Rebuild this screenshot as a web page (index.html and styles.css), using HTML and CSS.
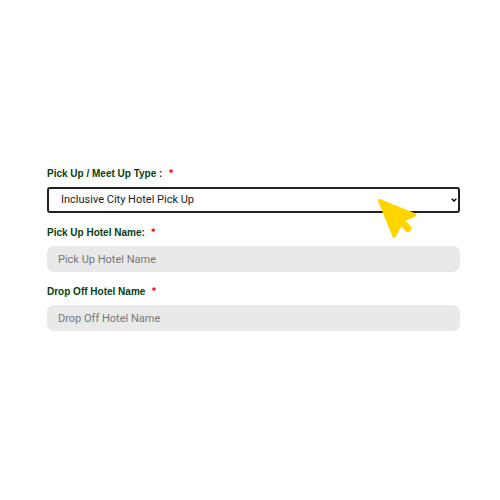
FILE: index.html
```html
<!DOCTYPE html>
<html lang="en">
<head>
<meta charset="utf-8">
<meta name="viewport" content="width=device-width, initial-scale=1">
<title>Pick up details</title>
<link rel="stylesheet" href="styles.css">
</head>
<body>
<form class="form">
  <div class="field">
    <label class="label" for="type">Pick Up / Meet Up Type : <span class="required">*</span></label>
    <div class="select-wrap">
      <select class="control select" id="type">
        <option>Inclusive City Hotel Pick Up</option>
      </select>
      <svg class="chevron" viewBox="0 0 6 4" aria-hidden="true"><path d="M.7.7 3 3 5.3.7"/></svg>
      <svg class="pointer" viewBox="0 0 40 40" aria-hidden="true"><path d="M2.5 2.5 38 17 26 22.5 17 38.5Z"/><path class="tail" d="M22 21 31 30.5"/></svg>
    </div>
  </div>
  <div class="field">
    <label class="label" for="pickup">Pick Up Hotel Name: <span class="required">*</span></label>
    <input class="control input" id="pickup" type="text" placeholder="Pick Up Hotel Name">
  </div>
  <div class="field">
    <label class="label" for="dropoff">Drop Off Hotel Name <span class="required">*</span></label>
    <input class="control input" id="dropoff" type="text" placeholder="Drop Off Hotel Name">
  </div>
</form>
</body>
</html>
```
FILE: styles.css
```css
* {
  box-sizing: border-box;
}

body {
  margin: 0;
  min-height: 100vh;
  display: flex;
  align-items: center;
  padding: 0 40px 4px 47px;
  background: #fff;
  font-family: Roboto, "Liberation Sans", sans-serif;
}

.form {
  flex: 1;
  display: flex;
  flex-direction: column;
  gap: 11px;
}

.field {
  display: flex;
  flex-direction: column;
  gap: 5px;
}

.label {
  font-family: "Liberation Sans", sans-serif;
  font-size: 10px;
  font-weight: 700;
  line-height: 17px;
  color: #06400f;
}

.required {
  margin-left: 3px;
  font-family: Inter, sans-serif;
  line-height: 1;
  color: #f00;
}

.control {
  width: 100%;
  height: 26px;
  font: 400 11px/16px Roboto, "Liberation Sans", sans-serif;
}

.input {
  border: 0;
  border-radius: 7px;
  padding: 0 11px;
  background: #e9e9e9;
}

.input::placeholder {
  color: #777;
}

.select-wrap {
  position: relative;
  display: flex;
}

.select {
  appearance: none;
  border: 2px solid #222;
  border-radius: 3px;
  padding: 0 12px;
  background: #fff;
  color: #222;
}

.chevron {
  position: absolute;
  right: 3px;
  top: 11px;
  width: 6px;
  height: 4px;
  fill: none;
  stroke: #000;
  stroke-width: 1.4;
}

.pointer {
  position: absolute;
  right: 43px;
  top: 11px;
  width: 40px;
  height: 40px;
  fill: #ffd500;
  stroke: #ffd500;
  stroke-width: 3;
  stroke-linejoin: round;
  pointer-events: none;
}

.tail {
  stroke-width: 7;
  stroke-linecap: round;
}
```
